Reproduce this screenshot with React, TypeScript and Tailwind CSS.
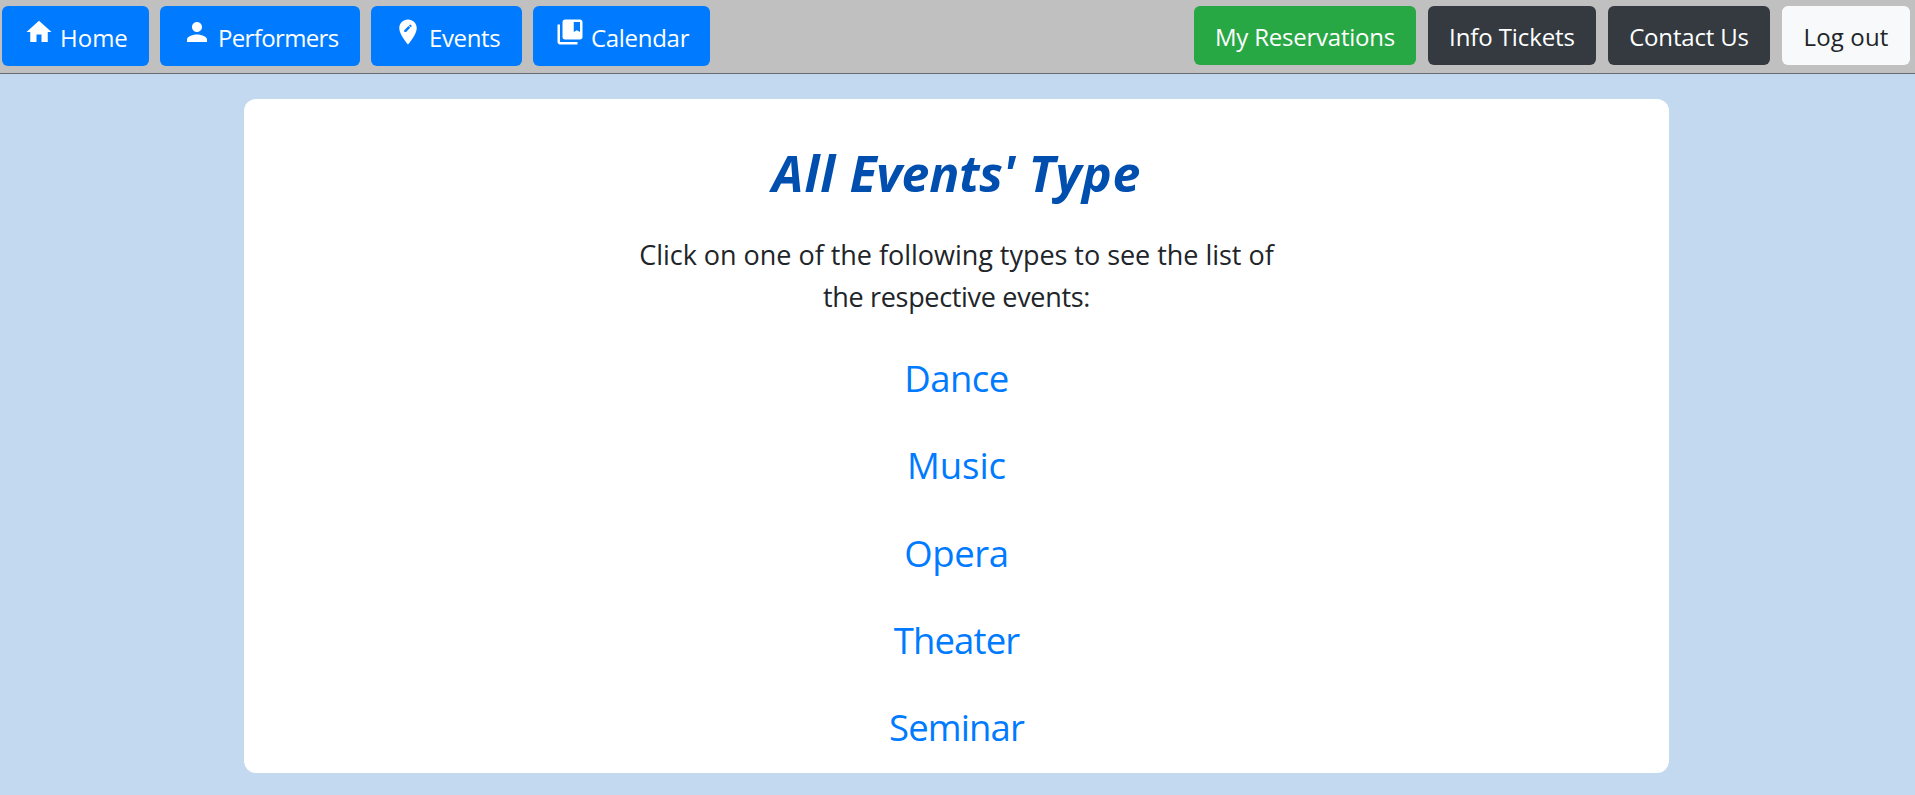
import React from 'react';

const HOME = 'M10 20v-6h4v6h5v-8h3L12 3 2 12h3v8z';
const PERSON =
  'M12 12c2.21 0 4-1.79 4-4s-1.79-4-4-4-4 1.79-4 4 1.79 4 4 4zm0 2c-2.67 0-8 1.34-8 4v2h16v-2c0-2.66-5.33-4-8-4z';
const PIN =
  'M12 2C8.14 2 5 5.14 5 9c0 5.25 7 13 7 13s7-7.75 7-13c0-3.86-3.14-7-7-7zm-1.56 10H9v-1.44l3.35-3.34 1.43 1.43L10.44 12zm4.45-4.45l-.7.7-1.44-1.44.7-.7c.15-.15.39-.15.54 0l.9.9c.15.15.15.39 0 .54z';
const BOOKMARK =
  'M4 6H2v14c0 1.1.9 2 2 2h14v-2H4V6zM20 2H8c-1.1 0-2 .9-2 2v12c0 1.1.9 2 2 2h12c1.1 0 2-.9 2-2V4c0-1.1-.9-2-2-2zm0 10l-2.5-1.5L15 12V4h5v8z';

const links = [
  { label: 'Home', icon: HOME, style: 'w-[147px]' },
  { label: 'Performers', icon: PERSON, style: 'w-[200px] tracking-[-0.65px]' },
  { label: 'Events', icon: PIN, style: 'w-[151px] tracking-[-0.35px]' },
  { label: 'Calendar', icon: BOOKMARK, style: 'w-[177px] tracking-[-0.3px]' },
];

const actions = [
  { label: 'My Reservations', style: 'w-[222px] bg-[#28a745] text-white tracking-[-0.22px]' },
  { label: 'Info Tickets', style: 'w-[168px] bg-[#343a40] text-white tracking-[-0.1px]' },
  { label: 'Contact Us', style: 'w-[162px] bg-[#343a40] text-white tracking-[-0.17px]' },
  { label: 'Log out', style: 'w-[128px] bg-[#f8f9fa] text-[#212529] tracking-[0.15px]' },
];

const types = [
  { label: 'Dance', style: 'tracking-[-0.5px]' },
  { label: 'Music', style: 'tracking-[-0.1px]' },
  { label: 'Opera', style: 'tracking-[-0.4px]' },
  { label: 'Theater', style: 'tracking-[-0.85px]' },
  { label: 'Seminar', style: 'tracking-[-0.9px]' },
];

export default function App() {
  return (
    <div className="min-h-[795px] bg-[#c3d9ef] font-['Open_Sans',sans-serif] text-[#212529]">
      <nav className="flex h-[74px] items-start justify-between border-b border-[#666b70] bg-[#c0c0c0] pt-[6px] pr-[5px] pl-[2px] text-[24px] leading-[36px]">
        <div className="flex gap-[11px]">
          {links.map((l) => (
            <a
              key={l.label}
              href="#"
              className={`flex h-[60px] items-start gap-[6.5px] rounded-[6px] bg-[#007bff] pl-[21.5px] whitespace-nowrap text-white ${l.style}`}
            >
              <svg viewBox="0 0 24 24" className="mt-[11px] size-[30px] shrink-0 fill-current">
                <path d={l.icon} />
              </svg>
              <span className="mt-[14px]">{l.label}</span>
            </a>
          ))}
        </div>
        <div className="flex gap-[12px]">
          {actions.map((a) => (
            <a
              key={a.label}
              href="#"
              className={`h-[59px] rounded-[6px] pt-[13px] text-center whitespace-nowrap ${a.style}`}
            >
              {a.label}
            </a>
          ))}
        </div>
      </nav>
      <main className="mt-[25px] ml-[244px] flex h-[674px] w-[1425px] flex-col items-center rounded-[12px] bg-white pt-[44px] text-center">
        <h1 className="text-[50px] leading-[60px] font-bold tracking-[0.3px] text-[#004faf] italic">
          <span className="tracking-[1px]">All</span> <span className="tracking-[-0.3px]">Events'</span>{' '}
          <span className="tracking-[0.6px]">Type</span>
        </h1>
        <p className="mt-[31px] flex flex-col text-[27px] leading-[42px]">
          <span className="tracking-[-0.03px]">Click on one of the following types to see the list of</span>
          <span className="tracking-[-0.32px]">the respective events:</span>
        </p>
        <ul className="mt-[17px] text-[36.5px] leading-[87.3px] text-[#007bff]">
          {types.map((t) => (
            <li key={t.label} className={t.style}>
              <a href="#">{t.label}</a>
            </li>
          ))}
        </ul>
      </main>
    </div>
  );
}
